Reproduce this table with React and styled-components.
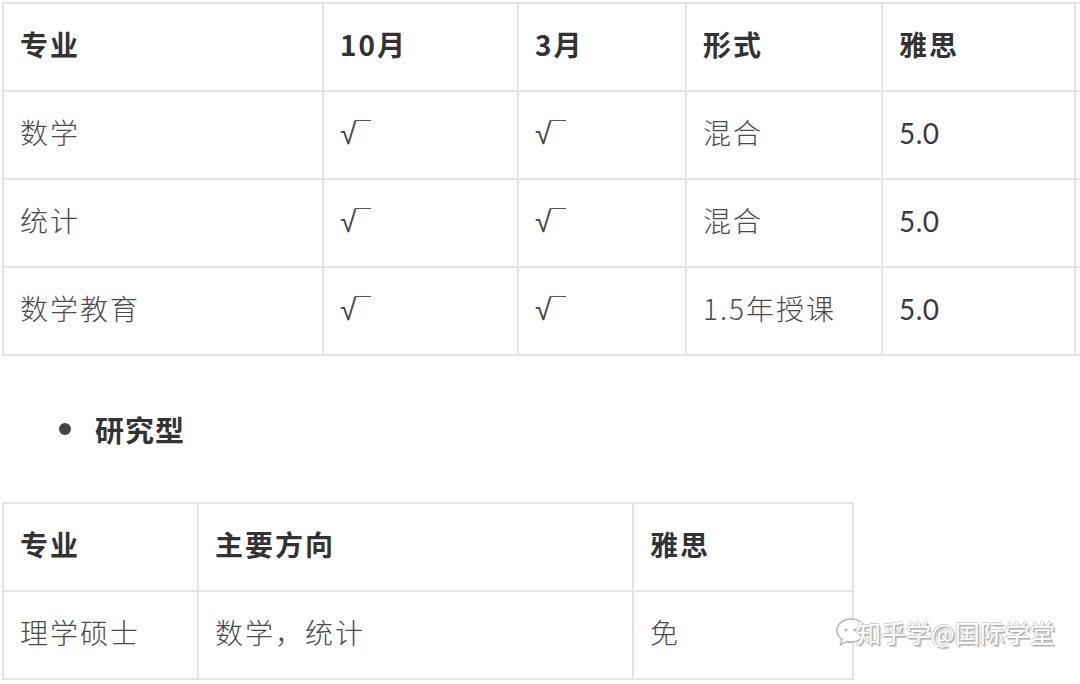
import React from "react";
import styled, { createGlobalStyle } from "styled-components";

const GlobalStyle = createGlobalStyle`
  html, body {
    margin: 0;
    padding: 0;
    background: #ffffff;
    overflow: hidden;
  }
  body {
    font-family: "Noto Sans CJK SC", "Noto Sans", sans-serif;
    color: #3c3c3c;
  }
`;

const Page = styled.div`
  position: relative;
  width: 1080px;
  height: 684px;
  padding: 2px 0 0 2px;
  box-sizing: border-box;
  overflow: hidden;
`;

const Table = styled.table`
  border-collapse: collapse;
  table-layout: fixed;
  width: ${(p) => p.$width}px;
`;

const Cell = styled.td`
  border: 2px solid #e4e4e4;
  height: 80px;
  padding: 0 16px 6px;
  vertical-align: middle;
  font-size: 28px;
  font-weight: ${(p) => (p.$head ? 700 : 300)};
  color: ${(p) => (p.$head ? "#333333" : "#4a4a4a")};
  white-space: nowrap;
  letter-spacing: 2px;
`;

const Num = styled.span`
  font-family: "Lato", "Noto Sans CJK SC", sans-serif;
  font-weight: 400;
  color: #3a3a3a;
  letter-spacing: 0.5px;
`;

const Check = styled.span`
  position: relative;
  display: inline-block;
  font-family: "DejaVu Sans", sans-serif;
  font-weight: 300;
  font-size: 30px;
  line-height: 1;
  color: #444;
  &::after {
    content: "";
    position: absolute;
    left: 16px;
    top: 1px;
    width: 15px;
    border-top: 1.5px solid #555;
  }
`;

const List = styled.ul`
  margin: 0;
  padding: 52px 0 52px 57px;
  list-style: none;
`;

const Item = styled.li`
  display: flex;
  align-items: center;
  gap: 24px;
  font-size: 29px;
  font-weight: 700;
  color: #333;
  letter-spacing: 1px;
  &::before {
    content: "";
    width: 12px;
    height: 12px;
    border-radius: 50%;
    background: #444;
  }
`;

const Watermark = styled.div`
  position: absolute;
  left: 834px;
  top: 614px;
  display: flex;
  align-items: center;
  gap: 2px;
  font-size: 25px;
  font-weight: 400;
  color: #ffffff;
  text-shadow: 1px 1px 0 #b4b4b4, -1px 0 0 #d0d0d0, 0 -1px 0 #d0d0d0, 2px 2px 1px #c4c4c4;
  pointer-events: none;
`;

const Bubble = () => (
  <svg width="34" height="34" viewBox="0 0 34 34" style={{ marginRight: -14 }}>
    <path
      d="M17 4C9 4 3 9 3 15.5c0 3.6 1.9 6.8 5 8.9L6.5 30l6.2-3.4c1.4.3 2.8.5 4.3.5 8 0 14-5.2 14-11.6S25 4 17 4z"
      fill="#ffffff"
      stroke="#b8b8b8"
      strokeWidth="1.6"
    />
    <circle cx="12" cy="15" r="1.6" fill="#b8b8b8" />
    <circle cx="21" cy="15" r="1.6" fill="#b8b8b8" />
  </svg>
);

const courses = [
  ["数学", true, true, "混合", "5.0"],
  ["统计", true, true, "混合", "5.0"],
  ["数学教育", true, true, "1.5年授课", "5.0"],
];

export default function App() {
  return (
    <Page>
      <GlobalStyle />
      <Table $width={1280}>
        <colgroup>
          <col style={{ width: 320 }} />
          <col style={{ width: 195 }} />
          <col style={{ width: 168 }} />
          <col style={{ width: 196 }} />
          <col style={{ width: 193 }} />
          <col style={{ width: 208 }} />
        </colgroup>
        <tbody>
          <tr>
            <Cell $head>专业</Cell>
            <Cell $head>10月</Cell>
            <Cell $head>3月</Cell>
            <Cell $head>形式</Cell>
            <Cell $head>雅思</Cell>
            <Cell $head></Cell>
          </tr>
          {courses.map((c) => (
            <tr key={c[0]}>
              <Cell>{c[0]}</Cell>
              <Cell>{c[1] && <Check>√</Check>}</Cell>
              <Cell>{c[2] && <Check>√</Check>}</Cell>
              <Cell>{c[3]}</Cell>
              <Cell>
                <Num>{c[4]}</Num>
              </Cell>
              <Cell></Cell>
            </tr>
          ))}
        </tbody>
      </Table>

      <List>
        <Item>研究型</Item>
      </List>

      <Table $width={850}>
        <colgroup>
          <col style={{ width: 195 }} />
          <col style={{ width: 435 }} />
          <col style={{ width: 220 }} />
        </colgroup>
        <tbody>
          <tr>
            <Cell $head>专业</Cell>
            <Cell $head>主要方向</Cell>
            <Cell $head>雅思</Cell>
          </tr>
          <tr>
            <Cell>理学硕士</Cell>
            <Cell>数学，统计</Cell>
            <Cell>免</Cell>
          </tr>
        </tbody>
      </Table>

      <Watermark>
        <Bubble />
        <span>知乎学@国际学堂</span>
      </Watermark>
    </Page>
  );
}
